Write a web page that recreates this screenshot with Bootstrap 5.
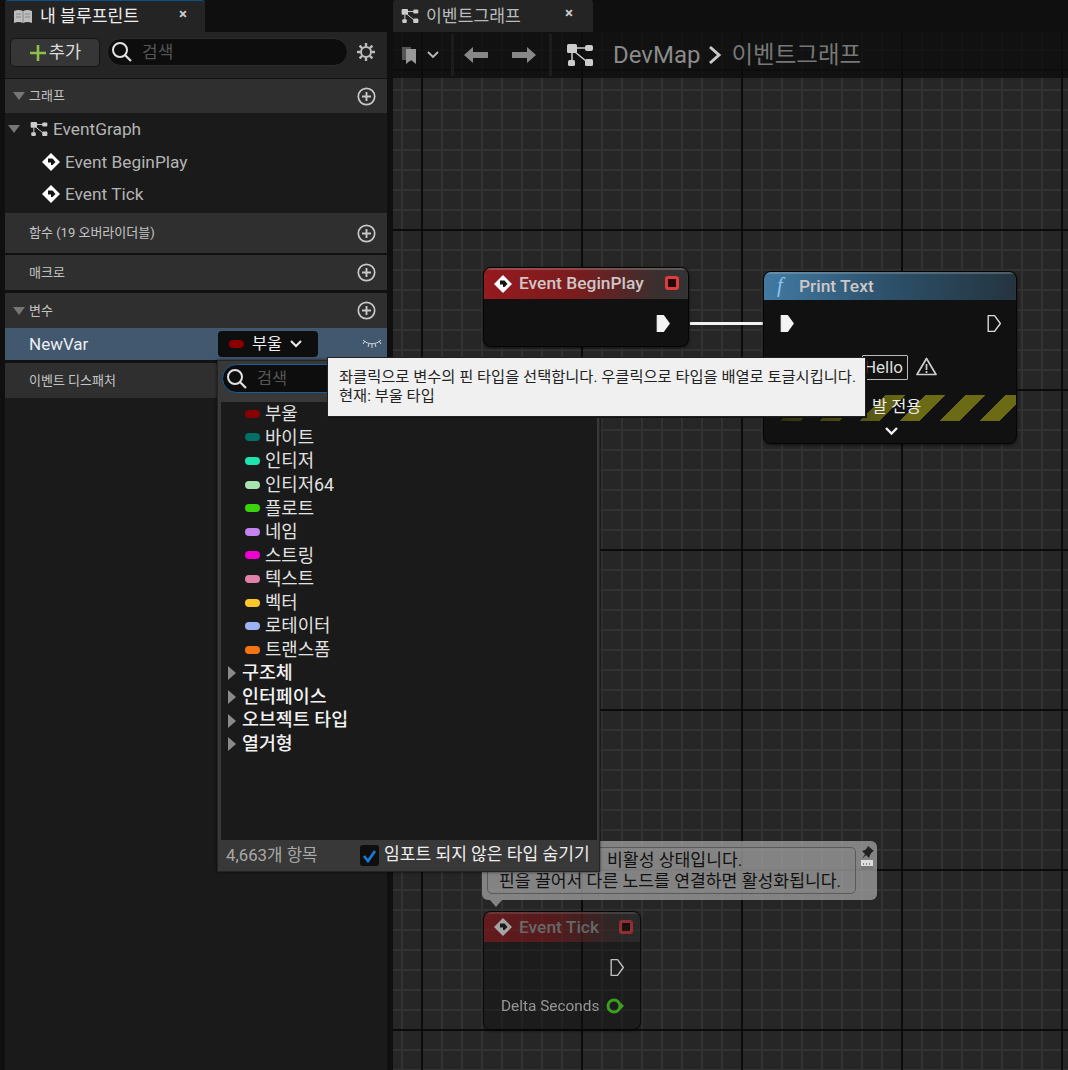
<!DOCTYPE html>
<html lang="ko">
<head>
<meta charset="utf-8">
<title>내 블루프린트</title>
<link href="https://cdn.jsdelivr.net/npm/bootstrap@5.3.0/dist/css/bootstrap.min.css" rel="stylesheet">
<style>
html,body{height:1070px;overflow:hidden;background:#0f0f0f}
body{font-family:Roboto,"Noto Sans CJK KR",sans-serif;color:#ccc;line-height:1.2}
.ue-root{width:1068px;height:1070px;position:relative}
.ue-left{width:387px;padding-left:5px;flex:none}
.ue-tabrow{height:32px;background:#0f0f0f}
.ue-tab{height:32px;background:#242424;display:flex;align-items:center;font-size:17.2px;position:relative;border-radius:3px 3px 0 0}
.ue-tab-a{width:200px;color:#eee;border-top:1px solid #0c4f86}
.ue-tab-b{width:200px;color:#bbb}
.ue-x{position:absolute;font-size:15px;font-weight:700;color:#ccc;line-height:1;top:6px}
.ue-tab-a .ue-x{left:174px}
.ue-tab-b .ue-x{left:172px}
.ue-tool{height:46px;background:#242424;padding:6px 5px 0 5px}
.ue-add{width:90px;height:29px;background:#363636;border:1px solid #151515;border-radius:5px;color:#ddd;font-size:17.6px;padding:0;display:flex;align-items:center;justify-content:center;gap:2px}
.ue-search{background:#0d0d0d;border:1px solid #2c2c2c;border-radius:15px;height:28px;display:flex;align-items:center;color:#555;font-size:17px}
.ue-search-a{width:241px;margin-left:7px;padding-left:3px}
.ue-search-a span{margin-left:9px}
.ue-head{background:#2f2f2f;display:flex;align-items:center;font-size:13px;color:#c4c4c4;padding-left:24px;position:relative}
.ue-head .ue-caret{position:absolute;left:8px;top:50%;margin-top:-4px}
.ue-plus{position:absolute;right:11px;top:50%;margin-top:-9.5px}
.ue-h34{height:34px}.ue-h35{height:35px}.ue-h40{height:40px}
.ue-tree{height:100px;background:#1a1a1a;position:relative;font-size:17.3px;color:#b4b4b4}
.ue-row{position:absolute;display:flex;align-items:center;height:24px;white-space:nowrap}
.ue-gap{height:2px;background:#111}
.ue-sel{height:32px;background:#42586f;color:#eee;font-size:17px;padding-left:24px;display:flex;align-items:center;position:relative}
.ue-eye{position:absolute;left:357px;top:10px}
.ue-type{position:absolute;left:213px;top:3px;width:100px;height:26px;background:#0e0e0e;border-radius:4px;display:flex;align-items:center;font-size:16.4px;padding-left:11px;color:#eee}
.ue-pill{width:15px;height:8px;border-radius:4px;display:inline-block;flex:none}
.ue-rest{height:672px;background:#1a1a1a}
.ue-canvas{width:675px;margin-left:6px;flex:none;position:relative;height:1038px;background-color:#262626;overflow:hidden}
.ue-gridv{position:absolute;inset:0;
 background-image:linear-gradient(90deg,#0b0b0b 2px,transparent 2px),linear-gradient(#0b0b0b 2px,transparent 2px),linear-gradient(90deg,#323232 2px,transparent 2px),linear-gradient(#323232 2px,transparent 2px);
 background-size:160px 160px,160px 160px,20px 20px,20px 20px;
 background-position:28px 0,0 37px,8px 0,0 17px}
.ue-bar{position:relative;height:46px;background:rgba(13,13,13,.82);display:flex;align-items:center;font-size:24px;color:#8a8a8a}
.ue-sep{width:3px;height:42px;background:#1c1c1c;flex:none}
.ue-crumb-b{color:#777;font-size:23.5px}
.ue-node{position:absolute;background:#101110;border:1px solid #050505;border-radius:8px;box-shadow:0 1px 3px rgba(0,0,0,.6);overflow:hidden}
.ue-nhead{display:flex;align-items:center;color:#cfc6c6;font-weight:500;font-size:17.4px;position:relative;white-space:nowrap;box-shadow:inset 0 2px 1px rgba(200,200,200,.28)}
.ue-red{background:linear-gradient(90deg,#951a1e,#7a1c1e 45%,#3a2f2f 85%,#333 100%);height:31px;padding-left:10px;gap:7px}
.ue-blue{background:linear-gradient(90deg,#427aa3,#2c5069 50%,#24343f 100%);height:28px;padding-left:13px;gap:6px}
.ue-stop{position:absolute;width:14px;height:14px;border:3px solid #e03a3e;background:#200606;border-radius:3px}
.ue-abs{position:absolute}
.ue-wire{position:absolute;left:297px;top:290px;width:75px;height:3px;background:#f2f2f2}
.ue-wire-l{position:absolute;left:279px;top:291px;width:110px;height:1px;background:#444}
.ue-hello{position:absolute;left:469px;top:323px;width:46px;height:25px;border:1px solid #bbb;border-radius:1px;color:#ddd;font-size:17px;display:flex;align-items:center;justify-content:flex-end;padding-right:4px}
.ue-stripe{position:absolute;left:17px;top:123px;width:236px;height:26px;background:repeating-linear-gradient(135deg,#6b6b16 0 3.54px,transparent 3.54px 17.68px,#6b6b16 17.68px 28.28px);-webkit-mask-image:linear-gradient(90deg,rgba(0,0,0,.35),#000 55%);mask-image:linear-gradient(90deg,rgba(0,0,0,.35),#000 55%)}
.ue-stripetxt{position:absolute;left:108px;top:125px;color:#eee;font-size:16.4px;white-space:nowrap}
.ue-comment{position:absolute;left:89px;top:809px;width:395px;height:59px;background:rgba(155,155,155,.8);border-radius:6px}
.ue-cbox{position:absolute;left:5px;top:6px;width:369px;height:47px;border:1px solid #5a5a5a;border-radius:5px;color:#111;font-size:17.2px;line-height:21px;padding:2px 0 0 11px;white-space:nowrap}
.ue-cline1{padding-left:108px}
.ue-tail{position:absolute;left:97px;top:868px;width:0;height:0;border-left:6px solid transparent;border-right:6px solid transparent;border-top:7px solid rgba(155,155,155,.8)}
.ue-tick{background:rgba(16,17,16,.5);opacity:.85}
.ue-tick .ue-nhead{color:#999}
.ue-delta{position:absolute;left:17px;top:85px;color:#aaa;font-size:15.4px;white-space:nowrap}
.ue-popup{position:absolute;left:217px;top:360px;width:383px;height:512px;background:#383838;border:1px solid #242424;z-index:5;box-shadow:0 0 3px rgba(0,0,0,.7)}
.ue-psearch{position:absolute;left:4px;top:3px;width:250px;height:29px;background:#0d0d0d;border:1px solid #155e9a;border-radius:15px;display:flex;align-items:center;color:#555;font-size:16.4px;padding-left:3px}
.ue-psearch span{margin-left:9px}
.ue-plist{position:absolute;left:3px;top:41px;width:376px;height:438px;background:#1a1a1a}
.ue-pitem{height:23.6px;display:flex;align-items:center;font-size:17.8px;color:#e2e2e2;padding-left:24px;gap:5px;white-space:nowrap}
.ue-pcat{height:23.6px;display:flex;align-items:center;font-size:18.4px;font-weight:500;color:#f2f2f2;padding-left:7px;gap:6px;white-space:nowrap}
.ue-pfoot{position:absolute;left:8px;top:479px;height:31px;display:flex;align-items:center;font-size:16.8px;color:#a8a8a8;white-space:nowrap}
.ue-check{position:absolute;left:134px;top:5px;width:19px;height:21px;background:#0e0e0e;border-radius:3px;display:flex;align-items:center;justify-content:center}
.ue-checktxt{position:absolute;left:158px;top:4px;font-size:17.1px;color:#eee}
.ue-tip{position:absolute;left:327px;top:357px;width:539px;height:60px;background:#f0f0f0;border:1px solid #222;box-shadow:1px 1px 0 #111;z-index:6;color:#222;font-size:15.3px;line-height:19px;padding:10px 0 0 11px;white-space:nowrap}
</style>
</head>
<body>
<svg width="0" height="0" class="position-absolute">
 <symbol id="ic-graph" viewBox="0 0 28 24"><rect x="1" y="1" width="10" height="9" rx="1.5" fill="currentColor"/><rect x="19" y="2" width="8" height="6" rx="2" fill="currentColor"/><rect x="2" y="17" width="7" height="6" rx="1.5" fill="currentColor"/><rect x="19" y="16" width="8" height="7" rx="1.5" fill="currentColor"/><path d="M10 5h10M6 10v8M9 9l11 9" stroke="currentColor" stroke-width="1.5" fill="none"/></symbol>
 <symbol id="ic-diamond" viewBox="0 0 18 18"><path d="M9 0 18 9 9 18 0 9Z" fill="#fff"/><path d="M6 5.500H10.500L13.500 9 10.500 12H9V9.500H6Z" fill="#151515"/></symbol>
 <symbol id="ic-plus" viewBox="0 0 19 19"><circle cx="9.500" cy="9.500" r="8.200" fill="none" stroke="#c8c8c8" stroke-width="1.700"/><path d="M9.500 5v9M5 9.500h9" stroke="#c8c8c8" stroke-width="1.900"/></symbol>
 <symbol id="ic-search" viewBox="0 0 22 22"><circle cx="9" cy="9" r="7" fill="none" stroke="#e2e2e2" stroke-width="2"/><path d="m14 14 6 6" stroke="#e2e2e2" stroke-width="2.200"/></symbol>
 <symbol id="ic-pinf" viewBox="0 0 14 18"><path d="M1.500 1.500h6L13 9 7.500 16.500h-6Z" fill="#f4f4f4" stroke="#f4f4f4" stroke-linejoin="round"/></symbol>
 <symbol id="ic-down" viewBox="0 0 12 8"><path d="M0 0h12L6 8Z" fill="#767676"/></symbol>
 <symbol id="ic-right" viewBox="0 0 8 14"><path d="M0 0v14l8-7Z" fill="#8a8a8a"/></symbol>
</svg>
<div class="ue-root d-flex">
 <div class="ue-left d-flex flex-column">
  <div class="ue-tabrow">
   <div class="ue-tab ue-tab-a">
    <svg class="ms-2" width="20" height="18" viewBox="0 0 20 18"><path d="M1 3c3-1.500 6-1.500 9 0 3-1.500 6-1.500 9 0v12c-3-1.500-6-1.500-9 0-3-1.500-6-1.500-9 0Z" fill="#bdbdbd"/><path d="M10 3v12M3 6h5M3 9h5M12 6h5M12 9h5" stroke="#888" stroke-width="1"/></svg>
    <span style="margin-left:7px">내 블루프린트</span><span class="ue-x">×</span>
   </div>
  </div>
  <div class="ue-tool d-flex align-items-start">
   <button class="btn ue-add" type="button"><svg width="18" height="18" viewBox="0 0 18 18"><path d="M9 1v16M1 9h16" stroke="#8fbe4c" stroke-width="2.600"/></svg>추가</button>
   <div class="ue-search ue-search-a"><svg width="22" height="22"><use href="#ic-search"/></svg><span>검색</span></div>
   <svg class="ms-2 mt-1" width="20" height="20" viewBox="0 0 20 20"><circle cx="10" cy="10" r="5" fill="none" stroke="#bdbdbd" stroke-width="2"/><path d="M10 1v3.500M10 15.500V19M1 10h3.500M15.500 10H19M3.600 3.600l2.500 2.500M13.900 13.900l2.500 2.500M3.600 16.400l2.500-2.500M13.900 6.100l2.500-2.500" stroke="#bdbdbd" stroke-width="2.400"/></svg>
  </div>
  <div class="ue-gap" style="height:1px"></div>
  <div class="ue-head ue-h34"><svg class="ue-caret" width="12" height="8"><use href="#ic-down"/></svg>그래프<svg class="ue-plus" width="19" height="19"><use href="#ic-plus"/></svg></div>
  <div class="ue-tree">
   <div class="ue-row" style="left:3px;top:4px"><svg width="12" height="8"><use href="#ic-down"/></svg><svg style="margin-left:10px;color:#ccc" width="18" height="16"><use href="#ic-graph"/></svg><span style="margin-left:5px">EventGraph</span></div>
   <div class="ue-row" style="left:37px;top:37px"><svg width="18" height="18"><use href="#ic-diamond"/></svg><span style="margin-left:5px">Event BeginPlay</span></div>
   <div class="ue-row" style="left:37px;top:69px"><svg width="18" height="18"><use href="#ic-diamond"/></svg><span style="margin-left:5px">Event Tick</span></div>
  </div>
  <div class="ue-head ue-h40">함수 (19 오버라이더블)<svg class="ue-plus" width="19" height="19"><use href="#ic-plus"/></svg></div>
  <div class="ue-gap"></div>
  <div class="ue-head ue-h35">매크로<svg class="ue-plus" width="19" height="19"><use href="#ic-plus"/></svg></div>
  <div class="ue-gap" style="height:3px"></div>
  <div class="ue-head ue-h35"><svg class="ue-caret" width="12" height="8"><use href="#ic-down"/></svg>변수<svg class="ue-plus" width="19" height="19"><use href="#ic-plus"/></svg></div>
  <div class="ue-sel">NewVar
   <div class="ue-type"><span class="ue-pill" style="background:#8a0000"></span><span class="ms-2">부울</span><svg class="ms-2" width="12" height="8" viewBox="0 0 12 8"><path d="m1 1 5 5 5-5" fill="none" stroke="#eee" stroke-width="2"/></svg></div>
   <svg class="ue-eye" width="20" height="12" viewBox="0 0 20 12"><path d="M1 2c5 5 13 5 18 0M3 3 1 6M7 5.500 6 9M13 5.500l1 3.500M17 3l2 3M10 6v4" fill="none" stroke="#cfd8e2" stroke-width="1"/></svg>
  </div>
  <div class="ue-gap" style="height:3px"></div>
  <div class="ue-head ue-h35">이벤트 디스패처</div>
  <div class="ue-rest"></div>
 </div>
 <div class="d-flex flex-column">
  <div class="ue-tabrow" style="width:681px;margin-left:6px">
   <div class="ue-tab ue-tab-b">
    <svg class="ms-2" width="18" height="16" style="color:#ccc"><use href="#ic-graph"/></svg>
    <span style="margin-left:7px">이벤트그래프</span><span class="ue-x">×</span>
   </div>
  </div>
  <div class="ue-canvas">
   <div class="ue-gridv"></div>
   <div class="ue-bar">
    <svg class="ms-2" width="18" height="18" viewBox="0 0 18 18" style="flex:none"><path d="M1 1h9v15l-2-2H1Z" fill="#555"/><path d="M5 3h10v15l-5-4-5 4Z" fill="#999"/></svg>
    <svg style="margin-left:8px;flex:none" width="12" height="8" viewBox="0 0 12 8"><path d="m1 1 5 5 5-5" fill="none" stroke="#bbb" stroke-width="1.800"/></svg>
    <div class="ue-sep" style="margin-left:12px"></div>
    <svg style="margin-left:10px;flex:none" width="24" height="18" viewBox="0 0 24 18"><path d="M0 9 9 1v5h15v6H9v5Z" fill="#888"/></svg>
    <svg style="margin-left:24px;flex:none" width="24" height="18" viewBox="0 0 24 18"><path d="M24 9 15 1v5H0v6h15v5Z" fill="#888"/></svg>
    <div class="ue-sep" style="margin-left:13px"></div>
    <svg style="margin-left:14px;flex:none;color:#ccc" width="28" height="24"><use href="#ic-graph"/></svg>
    <span style="margin-left:19px">DevMap</span>
    <svg style="margin-left:8px;flex:none" width="14" height="20" viewBox="0 0 14 20"><path d="m2 2 9 8-9 8" fill="none" stroke="#c8c8c8" stroke-width="3"/></svg>
    <span class="ue-crumb-b" style="margin-left:9px">이벤트그래프</span>
   </div>
   <div class="ue-wire-l"></div><div class="ue-wire"></div>
   <div class="ue-node" style="left:90px;top:235px;width:206px;height:80px">
    <div class="ue-nhead ue-red"><svg width="18" height="18"><use href="#ic-diamond"/></svg>Event BeginPlay<span class="ue-stop" style="left:181px;top:8px"></span></div>
    <svg class="ue-abs" style="left:171px;top:46px" width="16" height="19"><use href="#ic-pinf"/></svg>
   </div>
   <div class="ue-node" style="left:370px;top:239px;width:254px;height:173px">
    <div class="ue-nhead ue-blue"><span style="font-family:'Liberation Serif',serif;font-style:italic;font-size:21px;color:#8cc4f0;width:16px">f</span>Print Text</div>
    <svg class="ue-abs" style="left:15px;top:42px" width="16" height="19"><use href="#ic-pinf"/></svg>
    <svg class="ue-abs" style="left:222px;top:42px" width="16" height="19" viewBox="0 0 14 18"><path d="M1.500 1.500h6L13 9 7.500 16.500h-6Z" fill="none" stroke="#ddd" stroke-width="1.300" stroke-linejoin="round"/></svg>
    <svg class="ue-abs" style="left:152px;top:85px" width="21" height="19" viewBox="0 0 21 19"><path d="M10.500 1.500 20 17.500H1Z" fill="none" stroke="#ccc" stroke-width="1.700" stroke-linejoin="round"/><path d="M10.500 7v6M10.500 14v2" stroke="#ccc" stroke-width="1.700"/></svg>
    <div class="ue-stripe"></div>
    <div class="ue-stripetxt">발 전용</div>
    <svg class="ue-abs" style="left:121px;top:155px" width="13" height="9" viewBox="0 0 13 9"><path d="m1 1 5.500 5.500L12 1" fill="none" stroke="#f2f2f2" stroke-width="2.400"/></svg>
   </div>
   <div class="ue-hello">Hello</div>
   <div class="ue-comment">
    <div class="ue-cbox"><div class="ue-cline1">비활성 상태입니다.</div><div>핀을 끌어서 다른 노드를 연결하면 활성화됩니다.</div></div>
    <svg class="ue-abs" style="left:379px;top:5px" width="13" height="13" viewBox="0 0 13 13"><path d="M7 0l6 5-2 1-2 3-1 3-3-3-4 4 3-5-3-3 3-1 2-2Z" fill="#222"/></svg>
    <svg class="ue-abs" style="left:379px;top:19px" width="12" height="10" viewBox="0 0 12 10"><rect width="12" height="6" fill="#ddd"/><rect y="6" width="12" height="4" fill="#777"/><path d="M2 4h1M5 4h1M8 4h1" stroke="#333"/></svg>
   </div>
   <div class="ue-tail"></div>
   <div class="ue-node ue-tick" style="left:90px;top:879px;width:158px;height:119px">
    <div class="ue-nhead ue-red" style="height:30px;opacity:.7">
     <svg width="18" height="18"><use href="#ic-diamond"/></svg>Event Tick<span class="ue-stop" style="left:135px;top:8px"></span></div>
    <svg class="ue-abs" style="left:125px;top:46px" width="16" height="19" viewBox="0 0 14 18"><path d="M1.500 1.500h6L13 9 7.500 16.500h-6Z" fill="none" stroke="#ddd" stroke-width="1.300" stroke-linejoin="round"/></svg>
    <div class="ue-delta">Delta Seconds</div>
    <svg class="ue-abs" style="left:122px;top:86px" width="18" height="16" viewBox="0 0 18 16"><circle cx="8" cy="8" r="6" fill="none" stroke="#3fb51f" stroke-width="3"/><path d="M15 5l3 3-3 3Z" fill="#3fb51f"/></svg>
   </div>
  </div>
 </div>

 <div class="ue-popup">
  <div class="ue-psearch"><svg width="22" height="22"><use href="#ic-search"/></svg><span>검색</span></div>
  <div class="ue-plist">
   <div class="ue-pitem"><span class="ue-pill" style="background:#8a0000"></span>부울</div>
   <div class="ue-pitem"><span class="ue-pill" style="background:#006f65"></span>바이트</div>
   <div class="ue-pitem"><span class="ue-pill" style="background:#1fe3af"></span>인티저</div>
   <div class="ue-pitem"><span class="ue-pill" style="background:#a8e2b0"></span>인티저64</div>
   <div class="ue-pitem"><span class="ue-pill" style="background:#39d40e"></span>플로트</div>
   <div class="ue-pitem"><span class="ue-pill" style="background:#c583ee"></span>네임</div>
   <div class="ue-pitem"><span class="ue-pill" style="background:#f000d0"></span>스트링</div>
   <div class="ue-pitem"><span class="ue-pill" style="background:#e081aa"></span>텍스트</div>
   <div class="ue-pitem"><span class="ue-pill" style="background:#fdc72c"></span>벡터</div>
   <div class="ue-pitem"><span class="ue-pill" style="background:#9db4f4"></span>로테이터</div>
   <div class="ue-pitem"><span class="ue-pill" style="background:#f67510"></span>트랜스폼</div>
   <div class="ue-pcat"><svg width="8" height="14"><use href="#ic-right"/></svg>구조체</div>
   <div class="ue-pcat"><svg width="8" height="14"><use href="#ic-right"/></svg>인터페이스</div>
   <div class="ue-pcat"><svg width="8" height="14"><use href="#ic-right"/></svg>오브젝트 타입</div>
   <div class="ue-pcat"><svg width="8" height="14"><use href="#ic-right"/></svg>열거형</div>
  </div>
  <div class="ue-pfoot">4,663개 항목
   <span class="ue-check"><svg width="15" height="14" viewBox="0 0 15 14"><path d="m2 7 4 5 7-10" fill="none" stroke="#1b78cf" stroke-width="2.800"/></svg></span>
   <span class="ue-checktxt">임포트 되지 않은 타입 숨기기</span>
  </div>
 </div>
 <div class="ue-tip">좌클릭으로 변수의 핀 타입을 선택합니다. 우클릭으로 타입을 배열로 토글시킵니다.<br>현재: 부울 타입</div>
</div>
</body>
</html>
